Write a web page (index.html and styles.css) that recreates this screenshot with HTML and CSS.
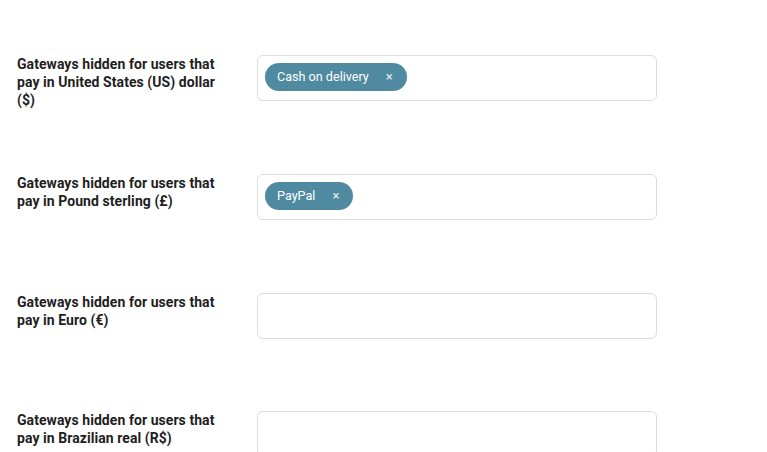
FILE: index.html
```html
<!DOCTYPE html>
<html lang="en">
<head>
    <meta charset="UTF-8">
    <title>Gateway settings</title>
    <link rel="stylesheet" href="styles.css">
</head>
<body>
    <div class="settings">
        <div class="setting-row">
            <label class="setting-label">Gateways hidden for users that pay in United States (US) dollar ($)</label>
            <div class="tag-select">
                <span class="tag">Cash on delivery <span class="tag-remove">×</span></span>
            </div>
        </div>
        <div class="setting-row">
            <label class="setting-label">Gateways hidden for users that pay in Pound sterling (£)</label>
            <div class="tag-select">
                <span class="tag">PayPal <span class="tag-remove">×</span></span>
            </div>
        </div>
        <div class="setting-row">
            <label class="setting-label">Gateways hidden for users that pay in Euro (€)</label>
            <div class="tag-select"></div>
        </div>
        <div class="setting-row">
            <label class="setting-label">Gateways hidden for users that pay in Brazilian real (R$)</label>
            <div class="tag-select"></div>
        </div>
    </div>
</body>
</html>
```

FILE: styles.css
```css
* {
    margin: 0;
    padding: 0;
    box-sizing: border-box;
}

body {
    font-family: Roboto, 'Liberation Sans', sans-serif;
    background: #fff;
    color: #1e1e1e;
}

.settings {
    padding: 55px 0 0 17px;
}

.setting-row {
    display: flex;
    align-items: flex-start;
    height: 119px;
}

.setting-row:nth-child(3) {
    height: 118px;
}

.setting-label {
    width: 240px;
    padding-right: 30px;
    font-size: 14px;
    font-weight: bold;
    line-height: 18px;
    letter-spacing: 0.06px;
    color: #1e1e1e;
}

.tag-select {
    width: 400px;
    height: 46px;
    border: 1px solid #dcdcde;
    border-radius: 6px;
    padding: 7px;
    display: flex;
    align-items: flex-start;
    gap: 6px;
}

.tag {
    display: inline-flex;
    align-items: center;
    height: 28px;
    padding: 0 14px 1px 12px;
    background: #4f8aa1;
    color: #fff;
    border-radius: 14px;
    font-size: 12.6px;
}

.tag-remove {
    margin-left: 17px;
    font-size: 13px;
    color: #e6eef2;
}
```
